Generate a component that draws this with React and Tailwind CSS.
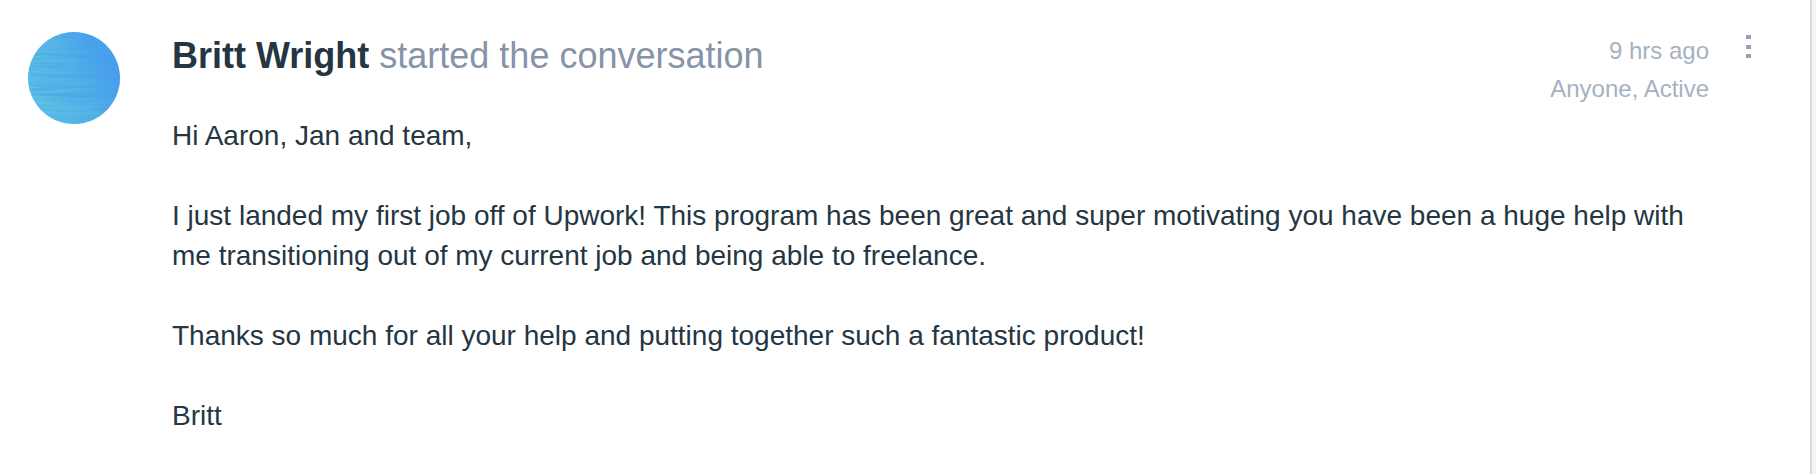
import React from 'react';

const message = {
    author: 'Britt Wright',
    action: 'started the conversation',
    time: '9 hrs ago',
    status: 'Anyone, Active',
    paragraphs: [
        'Hi Aaron, Jan and team,',
        'I just landed my first job off of Upwork! This program has been great and super motivating you have been a huge help with me transitioning out of my current job and being able to freelance.',
        'Thanks so much for all your help and putting together such a fantastic product!',
        'Britt',
    ],
};

const Avatar = () => (
    <svg className="size-23 shrink-0" viewBox="0 0 92 92" role="img" aria-label={message.author}>
        <defs>
            <linearGradient id="avatarFill" x1="0" y1="0.75" x2="1" y2="0.25">
                <stop offset="0.1" stopColor="#5cc1e4" />
                <stop offset="0.5" stopColor="#54b3e8" />
                <stop offset="0.85" stopColor="#489fec" />
            </linearGradient>
            {/* fine horizontal brush strokes */}
            <filter id="avatarBrush" x="0" y="0" width="1" height="1" colorInterpolationFilters="sRGB">
                <feTurbulence type="fractalNoise" baseFrequency="0.014 0.3" numOctaves="4" seed="4" />
                <feColorMatrix values="0 0 0 0 0.28  0 0 0 0 0.64  0 0 0 0 0.9  2.6 0 0 0 -1.05" />
            </filter>
            <clipPath id="avatarClip">
                <circle cx="46" cy="46" r="46" />
            </clipPath>
        </defs>
        <circle cx="46" cy="46" r="46" fill="url(#avatarFill)" />
        <g clipPath="url(#avatarClip)" opacity="0.75">
            <rect width="92" height="92" filter="url(#avatarBrush)" />
        </g>
    </svg>
);

const MessageMeta = () => (
    <div className="flex shrink-0 items-start gap-[25px]">
        <div className="text-right text-2xl leading-[38px] text-[#a5b2bf]">
            <p>{message.time}</p>
            <p>{message.status}</p>
        </div>
        <button type="button" aria-label="More options" className="px-3 text-[#93a1b3]">
            <svg className="h-8 w-[5px]" viewBox="0 0 5 32" fill="currentColor" shapeRendering="crispEdges">
                <rect y="3" width="5" height="4" />
                <rect y="13" width="5" height="4" />
                <rect y="22" width="5" height="4" />
            </svg>
        </button>
    </div>
);

const App = () => {
    return (
        <div className="min-h-screen bg-[#f1f3f5] pr-1 font-['Liberation_Sans',Arial,sans-serif]">
            <article className="flex min-h-screen items-start gap-13 border-r-2 border-[#d5dce4] bg-white pt-8 pb-7 pl-7">
                <Avatar />
                <div className="min-w-0 flex-1">
                    <header className="flex items-start justify-between pr-[47px]">
                        <h1 className="text-4xl leading-[48px] text-[#8594a6]">
                            <span className="font-bold text-[#253642]">{message.author}</span> {message.action}
                        </h1>
                        <MessageMeta />
                    </header>
                    <div className="mt-2 space-y-10 pr-[100px] text-[28px] leading-[40px] text-[#253642]">
                        {message.paragraphs.map((text) => (
                            <p key={text}>{text}</p>
                        ))}
                    </div>
                </div>
            </article>
        </div>
    );
};

export default App;
